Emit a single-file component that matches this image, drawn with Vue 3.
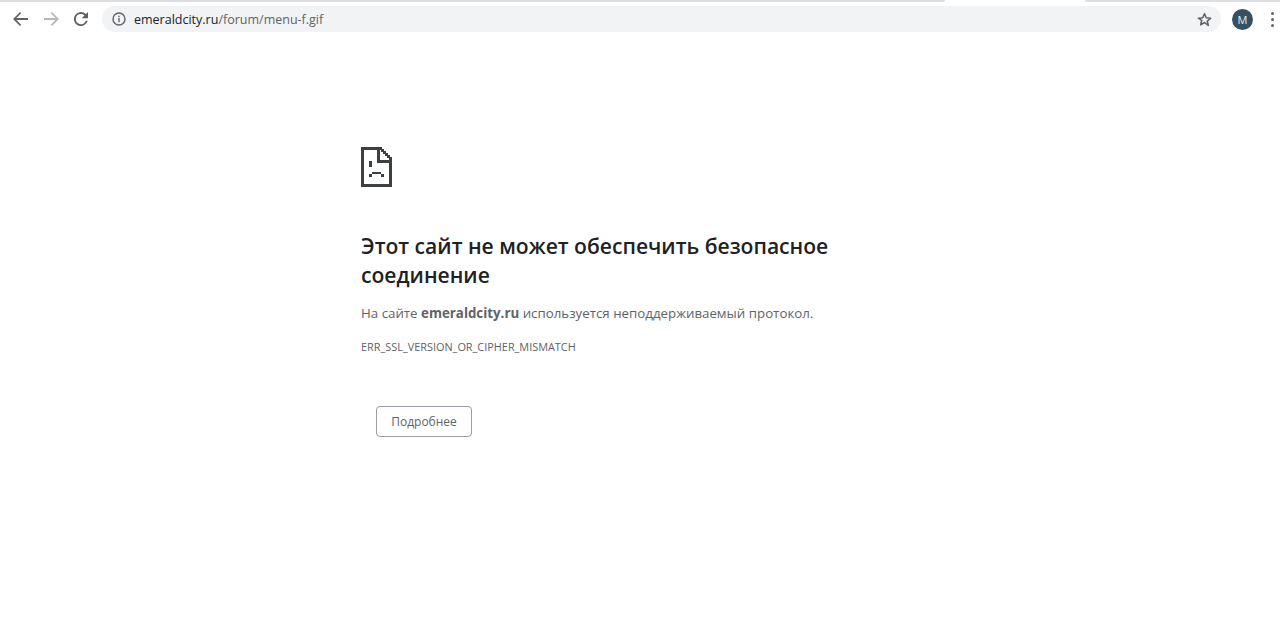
<script setup>
</script>

<template>
  <div class="page">
    <header class="toolbar">
      <div class="tabstrip">
        <div class="strip s1"></div>
        <div class="strip s2"></div>
      </div>
      <div class="bar">
        <svg class="nav back" width="15" height="14" viewBox="0 0 15 14"><path d="M15 6.100H3.500L8.200 1.300 7 0 0 7l7 7 1.200-1.300L3.500 7.900H15z" fill="#5f6368"/></svg>
        <svg class="nav fwd" width="15" height="14" viewBox="0 0 15 14"><path d="M0 6.100h11.500L6.800 1.300 8 0l7 7-7 7-1.200-1.300 4.700-4.800H0z" fill="#b4b7bb"/></svg>
        <svg class="nav reload" width="14" height="14" viewBox="0 0 16 16"><path d="M13.600 2.400A8 8 0 1 0 15.700 10h-2.300A5.800 5.800 0 1 1 8 2.200c1.600 0 3 .7 4 1.700L8.800 7H16V0z" fill="#5f6368"/></svg>
        <div class="omnibox">
          <svg class="info" width="14" height="14" viewBox="0 0 14 14"><circle cx="7" cy="7" r="6" fill="none" stroke="#5f6368" stroke-width="1.400"/><rect x="6.300" y="6" width="1.400" height="4.200" fill="#5f6368"/><rect x="6.300" y="3.700" width="1.400" height="1.400" fill="#5f6368"/></svg>
          <span class="url"><span class="host">emeraldcity.ru</span>/forum/menu-f.gif</span>
          <svg class="star" width="15" height="15" viewBox="0 0 24 24"><path d="M12 2.800l2.800 6.500 7 .6-5.300 4.600 1.600 6.900L12 16.800l-6.100 3.600 1.600-6.900L2.200 9.900l7-.6z" fill="none" stroke="#5f6368" stroke-width="2.500" stroke-linejoin="round"/></svg>
        </div>
        <div class="avatar">M</div>
        <div class="menu"><i></i><i></i><i></i></div>
      </div>
    </header>
    <main class="content">
      <svg class="sad" width="31" height="40" viewBox="0 0 32 40" preserveAspectRatio="none" shape-rendering="crispEdges">
        <path d="M0 0h19v3H3v34h26V16h3v24H0z" fill="#3c4043"/>
        <path d="M17 0h5v2h2v2h2v2h2v2h2v2h2v6H17z M20 3v10h9v-2h-2V9h-2V7h-2V5h-2V3z" fill="#3c4043" fill-rule="evenodd"/>
        <path d="M8 14h3v6H8z M11 25h10v2H11z M8 27h3v3H8z M21 27h3v3h-3z" fill="#3c4043"/>
      </svg>
      <h1 class="title">Этот сайт не может обеспечить безопасное соединение</h1>
      <p class="desc">На сайте <strong>emeraldcity.ru</strong> используется неподдерживаемый протокол.</p>
      <p class="code">ERR_SSL_VERSION_OR_CIPHER_MISMATCH</p>
      <button class="details">Подробнее</button>
    </main>
  </div>
</template>

<style>
html, body { margin: 0; background: #fff; }
</style>

<style scoped>
.page { width: 1280px; height: 627px; overflow: hidden; background: #fff; font-family: "Open Sans", "Noto Sans", sans-serif; }
.toolbar { height: 36px; }
.tabstrip { height: 2px; display: flex; justify-content: space-between; }
.strip { height: 2px; background: #dcdee2; }
.s1 { width: 945px; border-bottom-right-radius: 4px; }
.s2 { width: 195px; border-bottom-left-radius: 4px; }
.bar { height: 34px; display: flex; align-items: center; }
.nav { flex: none; }
.back { margin-left: 13px; }
.fwd { margin-left: 16px; }
.reload { margin-left: 15px; }
.omnibox { margin-left: 14px; width: 1119px; height: 26px; border-radius: 13px; background: #f1f3f4; display: flex; align-items: center; box-sizing: border-box; padding: 0 9px 0 10px; }
.info { flex: none; }
.url { margin-left: 8px; font-size: 12.500px; color: #5f6368; white-space: nowrap; }
.host { color: #202124; }
.star { margin-left: auto; flex: none; }
.avatar { flex: none; margin-left: 11px; width: 21px; height: 21px; border-radius: 50%; background: #37505f; color: #e6ecef; font-size: 11px; line-height: 21px; text-align: center; }
.menu { flex: none; margin-left: 18px; display: flex; flex-direction: column; gap: 3px; }
.menu i { display: block; width: 3px; height: 3px; border-radius: 50%; background: #5f6368; }
.content { margin-left: 361px; width: 500px; padding-top: 111px; }
.sad { display: block; }
.title { margin: 44px 0 0; font-size: 21.100px; line-height: 29px; font-weight: 600; color: #202124; width: 480px; }
.desc { margin: 14px 0 0; font-size: 13.300px; line-height: 20px; color: #5f6368; white-space: nowrap; }
.desc strong { font-weight: 700; color: #5f6368; }
.code { margin: 17px 0 0; font-size: 10.900px; line-height: 14px; color: #5f6368; white-space: nowrap; }
.details { display: block; margin: 52px 0 0 15px; width: 96px; height: 31px; box-sizing: border-box; background: #fff; border: 1px solid #9aa0a6; border-radius: 4px; font: inherit; font-size: 12px; color: #5f6368; padding: 0; }
</style>
